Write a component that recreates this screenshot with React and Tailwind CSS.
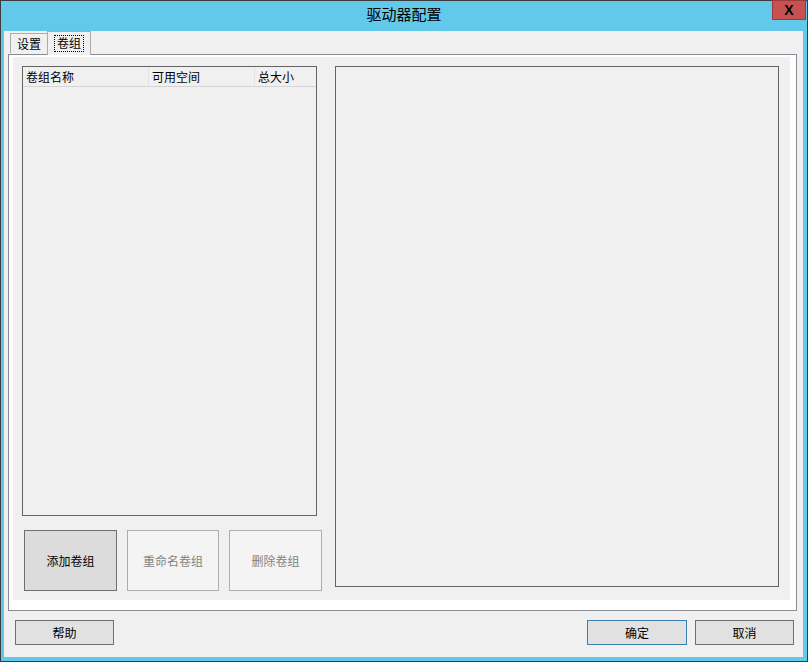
import React from 'react';

const font = { fontFamily: '"Noto Sans CJK SC", "Noto Sans", sans-serif' };

const Btn = ({ children, className = '' }) => (
  <button className={`flex items-center justify-center text-[12px] leading-none ${className}`}>
    {children}
  </button>
);

export default function App() {
  return (
    <div
      className="w-[808px] h-[662px] bg-[#63c9ea] border border-[#3c3c3c] flex flex-col text-black"
      style={font}
    >
      {/* title bar */}
      <div className="relative h-[30px] shrink-0 flex items-center justify-center">
        <span className="text-[15px] leading-none mt-[-5px]">驱动器配置</span>
        <div className="absolute right-[1px] top-[-1px] w-[34px] h-[20px] bg-[#c75050] border border-[#9c3a3a] flex items-center justify-center">
          <span className="text-[14px] font-bold leading-none" style={{ fontFamily: '"Liberation Sans", sans-serif' }}>X</span>
        </div>
      </div>

      {/* body */}
      <div className="flex-1 ml-[3px] mr-[4px] mb-[4px] bg-[#f0f0f0] flex flex-col">
        {/* tabs */}
        <div className="flex items-end h-[23px] pl-[6px] shrink-0 relative z-10">
          <div className="w-[38px] h-[20px] border border-[#acacac] border-b-0 bg-[#f0f0f0] flex items-center justify-center text-[12px] leading-none mb-[1px]">
            设置
          </div>
          <div className="w-[44px] h-[24px] border border-[#acacac] border-b-0 bg-[#f0f0f0] ml-[-1px] flex items-center justify-center -mb-[1px] pb-[1px]">
            <span className="border border-dotted border-black px-[2px] h-[17px] flex items-center text-[12px] leading-none">卷组</span>
          </div>
        </div>

        {/* tab page */}
        <div className="ml-[4px] mr-[6px] h-[557px] border border-[#898c95] bg-white pl-[4px] pt-[2px] pr-[6px] pb-[10px] flex">
          <div className="flex-1 bg-[#f0f0f0] flex pt-[9px] pl-[9px]">
            {/* left column */}
            <div className="w-[300px] flex flex-col">
              <div className="w-[295px] h-[450px] border border-[#646464] flex flex-col">
                <div className="h-[20px] flex border-b border-[#d5d5d5] text-[12px] leading-none">
                  <div className="w-[126px] border-r border-[#e3e3e3] flex items-center pl-[3px]">卷组名称</div>
                  <div className="w-[106px] border-r border-[#e3e3e3] flex items-center pl-[3px]">可用空间</div>
                  <div className="w-[61px] flex items-center pl-[3px]">总大小</div>
                </div>
                <div className="flex-1" />
              </div>
              <div className="flex gap-[10px] mt-[14px] ml-[2px]">
                <Btn className="w-[93px] h-[61px] bg-[#dcdcdc] border border-[#707070]">添加卷组</Btn>
                <Btn className="w-[92px] h-[61px] bg-[#f4f4f4] border border-[#adadad] text-[#838383]">重命名卷组</Btn>
                <Btn className="w-[93px] h-[61px] bg-[#f4f4f4] border border-[#adadad] text-[#838383]">删除卷组</Btn>
              </div>
            </div>
            {/* right panel */}
            <div className="ml-[13px] w-[444px] h-[521px] border border-[#646464]" />
          </div>
        </div>

        {/* footer buttons */}
        <div className="flex items-start mt-[9px] pl-[11px] pr-[9px]">
          <Btn className="w-[99px] h-[25px] bg-[#e1e1e1] border border-[#707070]">帮助</Btn>
          <div className="flex-1" />
          <Btn className="w-[100px] h-[25px] bg-[#e1e1e1] border border-[#3c7fb1]">确定</Btn>
          <Btn className="w-[99px] h-[25px] bg-[#e1e1e1] border border-[#707070] ml-[8px]">取消</Btn>
        </div>
      </div>
    </div>
  );
}
